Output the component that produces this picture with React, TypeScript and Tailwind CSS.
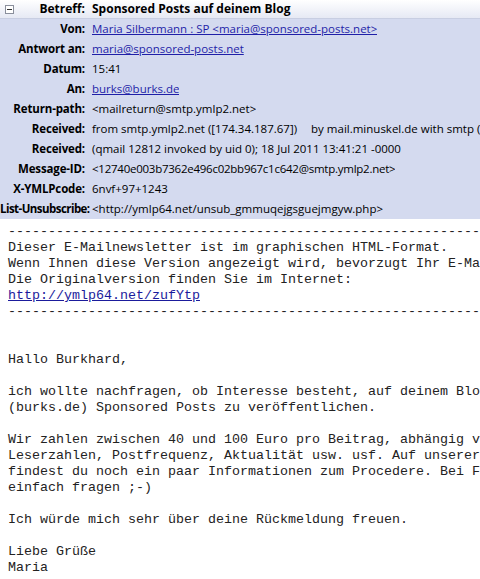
import React from "react";

const rows: { label: string; value: React.ReactNode; tight?: boolean }[] = [
  { label: "Von:", value: <a className="text-[#1f1fa8] underline">Maria Silbermann : SP &lt;maria@sponsored-posts.net&gt;</a> },
  { label: "Antwort an:", value: <a className="text-[#1f1fa8] underline">maria@sponsored-posts.net</a> },
  { label: "Datum:", value: "15:41" },
  { label: "An:", value: <a className="text-[#1f1fa8] underline">burks@burks.de</a> },
  { label: "Return-path:", value: "<mailreturn@smtp.ymlp2.net>" },
  { label: "Received:", value: <span>from smtp.ymlp2.net ([174.34.187.67])<span className="inline-block w-[14px]" />by mail.minuskel.de with smtp (Exim 4.69)</span> },
  { label: "Received:", value: "(qmail 12812 invoked by uid 0); 18 Jul 2011 13:41:21 -0000" },
  { label: "Message-ID:", value: <span className="tracking-[-0.25px]">&lt;12740e003b7362e496c02bb967c1c642@smtp.ymlp2.net&gt;</span> },
  { label: "X-YMLPcode:", value: "6nvf+97+1243" },
  { label: "List-Unsubscribe:", value: "<http://ymlp64.net/unsub_gmmuqejgsguejmgyw.php>", tight: true },
];

const body = `-----------------------------------------------------------------
Dieser E-Mailnewsletter ist im graphischen HTML-Format.
Wenn Ihnen diese Version angezeigt wird, bevorzugt Ihr E-Mail-Programm
Die Originalversion finden Sie im Internet:
@@LINK@@
-----------------------------------------------------------------


Hallo Burkhard,

ich wollte nachfragen, ob Interesse besteht, auf deinem Blog
(burks.de) Sponsored Posts zu veröffentlichen.

Wir zahlen zwischen 40 und 100 Euro pro Beitrag, abhängig von
Leserzahlen, Postfrequenz, Aktualität usw. usf. Auf unserer Website
findest du noch ein paar Informationen zum Procedere. Bei Fragen
einfach fragen ;-)

Ich würde mich sehr über deine Rückmeldung freuen.

Liebe Grüße
Maria`;

export default function App() {
  const [before, after] = body.split("@@LINK@@");
  return (
    <div className="w-[480px] h-[579px] overflow-hidden bg-white">
      <div
        className="bg-[#d4daef] text-[11.5px] text-black pb-[0px]"
        style={{ fontFamily: '"Open Sans", "Noto Sans", sans-serif' }}
      >
        <div className="flex items-center h-[19px] bg-gradient-to-b from-[#ffffff] to-[#e6e9f4] border-b border-[#c8cee2]">
          <div className="w-[85px] flex items-center justify-between pl-[5px] shrink-0">
            <div className="w-[9px] h-[9px] border border-[#8a8f9c] bg-white flex items-center justify-center">
              <div className="w-[5px] h-[1px] bg-[#333]" />
            </div>
            <span className="font-bold text-[12px]">Betreff:</span>
          </div>
          <span className="font-bold text-[12px] pl-[7px] whitespace-nowrap">Sponsored Posts auf deinem Blog</span>
        </div>
        {rows.map((r, i) => (
          <div key={i} className="flex items-center h-[20px]">
            <div
              className={
                r.tight
                  ? "w-[85px] shrink-0 text-right font-bold whitespace-nowrap tracking-[-0.55px] pr-[1px]"
                  : "w-[85px] shrink-0 text-right font-bold whitespace-nowrap tracking-[-0.15px]"
              }
            >
              {r.label}
            </div>
            <div className="pl-[7px] whitespace-nowrap overflow-hidden">{r.value}</div>
          </div>
        ))}
      </div>
      <pre
        className="pl-[8px] pt-[5px] text-[13.33px] leading-[16px] text-[#222] whitespace-pre overflow-hidden"
        style={{ fontFamily: '"Liberation Mono", "Courier New", monospace' }}
      >
        {before}
        <a className="text-[#1b1b9c] underline">http://ymlp64.net/zufYtp</a>
        {after}
      </pre>
    </div>
  );
}
